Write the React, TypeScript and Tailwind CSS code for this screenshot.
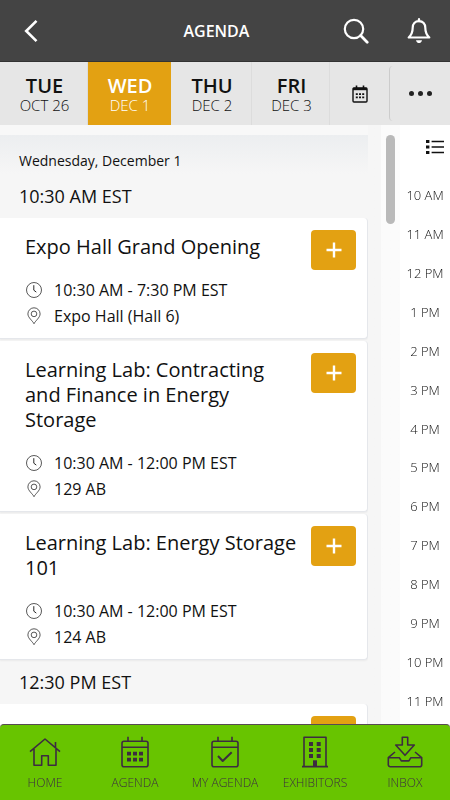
import { useState } from "react";
import type { ReactNode } from "react";

type Session = {
  title: string;
  time: string;
  place: string;
};

type Group = {
  start: string;
  sessions: Session[];
};

const days = [
  { name: "TUE", date: "OCT 26" },
  { name: "WED", date: "DEC 1" },
  { name: "THU", date: "DEC 2" },
  { name: "FRI", date: "DEC 3" },
];

const groups: Group[] = [
  {
    start: "10:30 AM EST",
    sessions: [
      { title: "Expo Hall Grand Opening", time: "10:30 AM - 7:30 PM EST", place: "Expo Hall (Hall 6)" },
      {
        title: "Learning Lab: Contracting and Finance in Energy Storage",
        time: "10:30 AM - 12:00 PM EST",
        place: "129 AB",
      },
      { title: "Learning Lab: Energy Storage 101", time: "10:30 AM - 12:00 PM EST", place: "124 AB" },
    ],
  },
  {
    start: "12:30 PM EST",
    sessions: [{ title: "", time: "", place: "" }],
  },
];

const hours = [
  "10 AM", "11 AM", "12 PM", "1 PM", "2 PM", "3 PM", "4 PM",
  "5 PM", "6 PM", "7 PM", "8 PM", "9 PM", "10 PM", "11 PM",
];

const BackIcon = () => (
  <svg viewBox="0 0 14 24" className="h-6 w-3.5" fill="none" stroke="currentColor" strokeWidth="2.6">
    <path d="M12.5 1.8 2.2 12l10.3 10.2" />
  </svg>
);

const SearchIcon = () => (
  <svg viewBox="0 0 26 26" className="size-[26px]" fill="none" stroke="currentColor" strokeWidth="2.2">
    <circle cx="11" cy="11" r="9.2" />
    <path d="m17.6 17.6 6.6 6.6" strokeWidth="2.8" strokeLinecap="round" />
  </svg>
);

const BellIcon = () => (
  <svg viewBox="0 0 24 26" className="h-[26px] w-6" fill="none" stroke="currentColor" strokeWidth="2.2" strokeLinejoin="round">
    <path d="M12 3.2c-4 0-6.300 2.800-6.300 6.600 0 5-1.500 7.400-4 9.700h20.600c-2.500-2.300-4-4.700-4-9.700 0-3.800-2.300-6.600-6.300-6.600Z" />
    <path d="M12 1.200v2" strokeLinecap="round" />
    <path d="M9 22.200h6c-.4 1.900-1.500 2.800-3 2.800s-2.600-.9-3-2.800Z" fill="currentColor" stroke="none" />
  </svg>
);

const SmallCalendarIcon = () => (
  <svg viewBox="0 0 16 18" className="h-[18px] w-4" fill="none" stroke="currentColor">
    <rect x="1" y="3" width="14" height="14" rx="1" strokeWidth="1.4" />
    <path d="M1 4h14" strokeWidth="2.4" />
    <path d="M4.5.5V4M11.500.5V4" strokeWidth="1.6" />
    <path d="M3.800 9.200h2m1.200 0h2m1.200 0h2M3.800 12.400h2m1.200 0h2m1.200 0h2" strokeWidth="1.8" />
  </svg>
);

const ListIcon = () => (
  <svg viewBox="0 0 18 16" className="h-4 w-[18px]" fill="none" stroke="currentColor">
    <path d="M0 2.500h3.400M0 8h3.400M0 13.500h3.400" strokeWidth="3" />
    <path d="M5.600 2.500H18M5.600 8H18M5.600 13.500H18" strokeWidth="1.7" />
  </svg>
);

const ClockIcon = () => (
  <svg viewBox="0 0 18 18" className="size-[18px]" fill="none" stroke="currentColor">
    <circle cx="9" cy="9" r="7.500" strokeWidth=".7" />
    <path d="M8.800 4.200v5l2.500 1.900" strokeWidth=".9" />
  </svg>
);

const PinIcon = () => (
  <svg viewBox="0 0 18 18" className="size-[18px]" fill="none" stroke="currentColor" strokeWidth=".7">
    <path d="M9 16.700C7.800 14 2.900 10.600 2.900 6.900a6.100 6.100 0 0 1 12.200 0c0 3.700-4.900 7.100-6.100 9.800Z" />
    <circle cx="9" cy="6.900" r="2.800" />
  </svg>
);

const NavSvg = ({ children }: { children: ReactNode }) => (
  <svg viewBox="0 0 32 32" className="size-8 overflow-visible" fill="none" stroke="currentColor" strokeWidth="1.6" strokeLinejoin="round">
    {children}
  </svg>
);

const calendarFrame = (
  <>
    <rect x="3" y="5.300" width="26" height="25.500" rx="2" />
    <path d="M3 11.300h26M9 .7v4.600M23 .7v4.600" />
  </>
);

const navItems = [
  {
    label: "HOME",
    icon: (
      <NavSvg>
        <path d="M1 15.700 16 3l15 12.700M26.500 6v5.800M5 13v16.300h7.700v-9.600h6.600v9.600H27V13" />
      </NavSvg>
    ),
  },
  {
    label: "AGENDA",
    icon: (
      <NavSvg>
        {calendarFrame}
        <path d="M8 17.700h4m2 0h4m2 0h4M8 23.700h4m2 0h4m2 0h4" strokeWidth="3.800" />
      </NavSvg>
    ),
  },
  {
    label: "MY AGENDA",
    icon: (
      <NavSvg>
        {calendarFrame}
        <path d="m9 20 4.700 5 9-8.700" strokeWidth="2" />
      </NavSvg>
    ),
  },
  {
    label: "EXHIBITORS",
    icon: (
      <NavSvg>
        <path d="M5 30.600V1.300h22v29.300M3 30.600h26" />
        <path d="M10 8h4m3.700 0h4M10 14h4m3.700 0h4M10 20h4m3.700 0h4" strokeWidth="4" />
        <path d="M14 24.300h4v6.300h-4z" fill="currentColor" stroke="none" />
      </NavSvg>
    ),
  },
  {
    label: "INBOX",
    icon: (
      <NavSvg>
        <path d="M13.300 1.300h5.400V9h6.600L16 19.300 6.700 9h6.600Z" />
        <path d="M6 16-.7 21.700v7a2 2 0 0 0 2 2h29.400a2 2 0 0 0 2-2v-7L26 16M-.7 21.700h11l2 3.200h7.600l2-3.200h10.800" />
      </NavSvg>
    ),
  },
];

const SessionCard = ({ session }: { session: Session }) => {
  const [added, setAdded] = useState(false);

  return (
    <li className="flex min-h-30 items-start rounded-r border-r border-b border-gray-200 bg-white pr-[11px] pb-[9px] pl-[25px] shadow-xs">
      <div className="min-w-0 flex-1 pt-4">
        <h3 className="mb-[18px] text-[20px] leading-[25px]">{session.title}</h3>
        {session.time && (
          <>
            <p className="flex items-center gap-[11px] text-[16px] leading-[26px]">
              <ClockIcon />
              {session.time}
            </p>
            <p className="flex items-center gap-[11px] text-[16px] leading-[26px]">
              <PinIcon />
              {session.place}
            </p>
          </>
        )}
      </div>
      <button
        onClick={() => setAdded(!added)}
        aria-label="Add to my agenda"
        aria-pressed={added}
        className="mt-3 ml-2 flex h-10 w-[45px] shrink-0 items-center justify-center rounded bg-[#e3a112] text-white"
      >
        <svg viewBox="0 0 16 16" className="size-4" stroke="currentColor" strokeWidth="2.4">
          <path d="M8 .5v15M.5 8h15" />
        </svg>
      </button>
    </li>
  );
};

const App = () => {
  const [activeDay, setActiveDay] = useState("WED");

  return (
    <div className="flex h-screen flex-col overflow-hidden bg-[#f8f8f8] font-['Open_Sans','Noto_Sans',sans-serif] text-[#111]">
      <header className="grid h-[62px] shrink-0 grid-cols-[9fr_auto_10fr] items-center border-b border-[#333] bg-[#444] pr-[19px] pl-5 text-white">
        <button aria-label="Back" className="justify-self-start px-1">
          <BackIcon />
        </button>
        <h1 className="text-[16px] font-semibold">AGENDA</h1>
        <div className="flex items-center gap-[38px] justify-self-end">
          <button aria-label="Search">
            <SearchIcon />
          </button>
          <button aria-label="Notifications">
            <BellIcon />
          </button>
        </div>
      </header>

      {/* Day picker */}
      <div className="grid h-[63px] shrink-0 grid-cols-[88fr_83fr_81fr_78fr_59fr_61fr] bg-[#e6e6e6]">
        {days.map((day) => (
          <button
            key={day.name}
            onClick={() => setActiveDay(day.name)}
            className={`flex flex-col items-center justify-center border-r pt-0.5 pl-0.5 ${
              activeDay === day.name ? "border-[#e3a112] bg-[#e3a112] text-white" : "border-[#dcdcdc]"
            }`}
          >
            <span className="text-[20px] leading-5 font-semibold">{day.name}</span>
            <span className="text-[15px] leading-[18px] font-light">{day.date}</span>
          </button>
        ))}
        <button aria-label="Calendar" className="flex items-center justify-center">
          <SmallCalendarIcon />
        </button>
        <button aria-label="More" className="my-1 flex items-center justify-center gap-1 rounded border-l border-[#ccc]">
          <span className="size-[5px] rounded-full bg-[#222]" />
          <span className="size-[5px] rounded-full bg-[#222]" />
          <span className="size-[5px] rounded-full bg-[#222]" />
        </button>
      </div>

      <div className="flex min-h-0 flex-1">
        <main className="mt-2.5 min-w-0 flex-1 overflow-y-auto bg-[#f6f6f6] [scrollbar-width:none]">
          <h2 className="bg-linear-to-b from-[#eceef0] to-[#f6f6f6] pt-4 pb-[3px] pl-[19px] text-[14px] leading-5">
            Wednesday, December 1
          </h2>
          {groups.map((group) => (
            <section key={group.start}>
              <h2 className="pl-[19px] text-[18px] leading-[44px]">{group.start}</h2>
              <ul className="flex flex-col gap-0.5">
                {group.sessions.map((session) => (
                  <SessionCard key={session.title} session={session} />
                ))}
              </ul>
            </section>
          ))}
        </main>

        {/* Gutter with the scroll thumb */}
        <div className="flex w-8 shrink-0 justify-end bg-linear-to-r from-[#f6f6f6] from-40% to-[#fbfbfb] to-40% pt-2.5 pr-[5px]">
          <div className="h-[89px] w-[9px] rounded-full bg-[#b9b9b9]" />
        </div>

        <aside className="flex w-[50px] shrink-0 flex-col bg-white pb-1">
          <button aria-label="List view" className="mt-3.5 mb-[21px] flex justify-end pr-1.5">
            <ListIcon />
          </button>
          <ol className="flex flex-1 flex-col">
            {hours.map((hour) => (
              <li key={hour} className="flex flex-1 items-center justify-center text-[13px] leading-4 font-light">
                {hour}
              </li>
            ))}
          </ol>
        </aside>
      </div>

      <nav className="grid h-[76px] shrink-0 grid-cols-5 rounded-t border-t border-[#574a52] bg-[#68c400] text-[#3d2c40]">
        {navItems.map((item) => (
          <a key={item.label} href="#" className="flex flex-col items-center gap-[7px] pt-[11px]">
            {item.icon}
            <span className="text-[12px] leading-4 font-light">{item.label}</span>
          </a>
        ))}
      </nav>
    </div>
  );
};

export default App;
